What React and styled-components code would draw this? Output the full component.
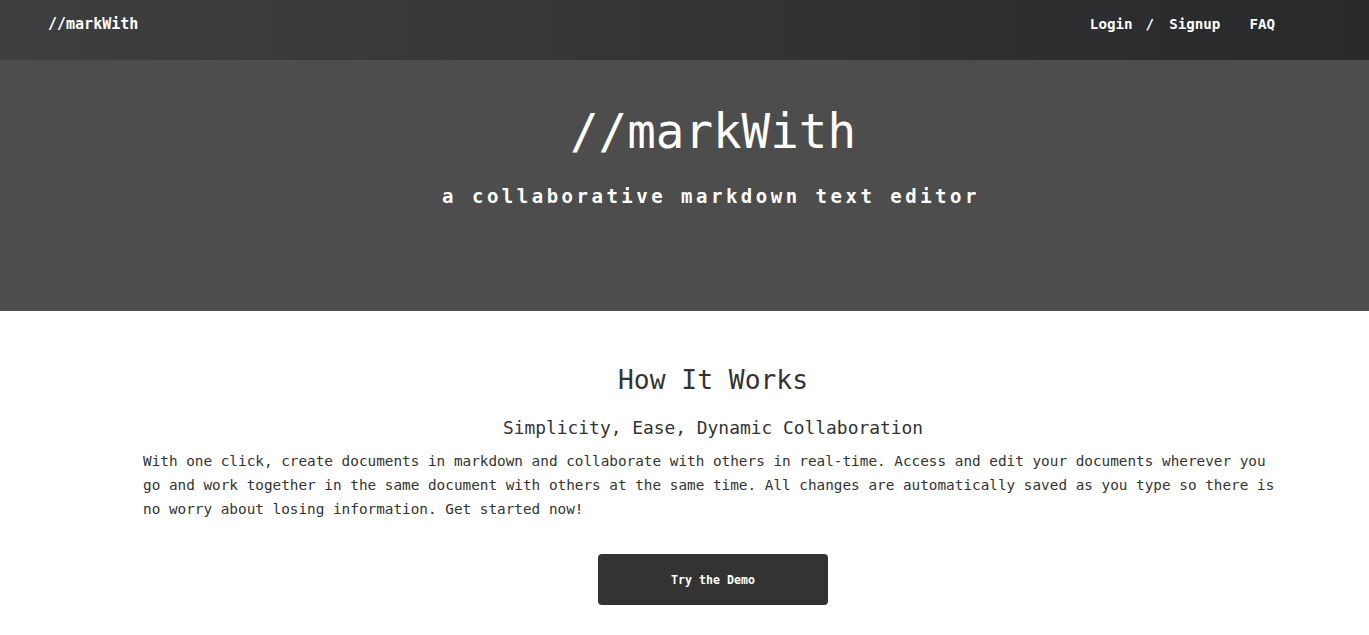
import React from "react";
import styled, { createGlobalStyle } from "styled-components";

const GlobalStyle = createGlobalStyle`
    body {
        margin: 0;
        font-family: "DejaVu Sans Mono", "Liberation Mono", monospace;
        background: #ffffff;
        color: #333333;
    }
`;

const NavBar = styled.nav`
    display: flex;
    align-items: flex-start;
    justify-content: space-between;
    height: 60px;
    box-sizing: border-box;
    padding: 14px 94px 0 48px;
    background: linear-gradient(90deg, #3e3f41 0%, #333436 50%, #28292b 100%);
`;

const Brand = styled.a`
    font-size: 15px;
    font-weight: 700;
    line-height: 20px;
    color: #ffffff;
    text-decoration: none;
`;

const NavLinks = styled.div`
    display: flex;
    align-items: center;
`;

const NavLink = styled.a`
    font-size: 14.2px;
    font-weight: 700;
    line-height: 20px;
    color: #ffffff;
    text-decoration: none;
    margin-left: ${({ $gap }) => $gap || 0}px;
`;

const Hero = styled.header`
    height: 251px;
    box-sizing: border-box;
    padding-top: 42px;
    padding-left: 57px;
    background: #4d4d4d;
    color: #ffffff;
    text-align: center;
`;

const HeroTitle = styled.h1`
    margin: 0;
    font-size: 47.5px;
    font-weight: 400;
    line-height: 60px;
`;

const HeroSubtitle = styled.h2`
    margin: 21px 0 0 -4px;
    font-size: 19px;
    font-weight: 700;
    line-height: 26px;
    letter-spacing: 3.5px;
`;

const Section = styled.section`
    width: 1140px;
    padding: 52px 0 30px 143px;
    text-align: center;
`;

const SectionTitle = styled.h2`
    margin: 0;
    font-size: 26.3px;
    font-weight: 400;
    line-height: 34px;
    color: #333333;
`;

const SectionLead = styled.h3`
    margin: 19px 0 0;
    font-size: 17.9px;
    font-weight: 400;
    line-height: 24px;
    color: #333333;
`;

const Body = styled.p`
    margin: 9px 0 0;
    text-align: left;
    font-size: 14.35px;
    line-height: 24px;
    color: #333333;
`;

const DemoButton = styled.a`
    display: inline-flex;
    align-items: center;
    justify-content: center;
    width: 230px;
    height: 51px;
    margin-top: 33px;
    border-radius: 4px;
    background: #333333;
    color: #ffffff;
    font-size: 11.6px;
    font-weight: 700;
    text-decoration: none;
`;

export default function App() {
    return (
        <>
            <GlobalStyle />
            <NavBar>
                <Brand href="#">//markWith</Brand>
                <NavLinks>
                    <NavLink href="#">Login</NavLink>
                    <NavLink as="span" $gap={13}>/</NavLink>
                    <NavLink href="#" $gap={15}>Signup</NavLink>
                    <NavLink href="#" $gap={29}>FAQ</NavLink>
                </NavLinks>
            </NavBar>
            <Hero>
                <HeroTitle>//markWith</HeroTitle>
                <HeroSubtitle>a collaborative markdown text editor</HeroSubtitle>
            </Hero>
            <Section>
                <SectionTitle>How It Works</SectionTitle>
                <SectionLead>Simplicity, Ease, Dynamic Collaboration</SectionLead>
                <Body>
                    With one click, create documents in markdown and collaborate with others in
                    real-time. Access and edit your documents wherever you go and work together in
                    the same document with others at the same time. All changes are automatically
                    saved as you type so there is no worry about losing information. Get started now!
                </Body>
                <DemoButton href="#">Try the Demo</DemoButton>
            </Section>
        </>
    );
}
